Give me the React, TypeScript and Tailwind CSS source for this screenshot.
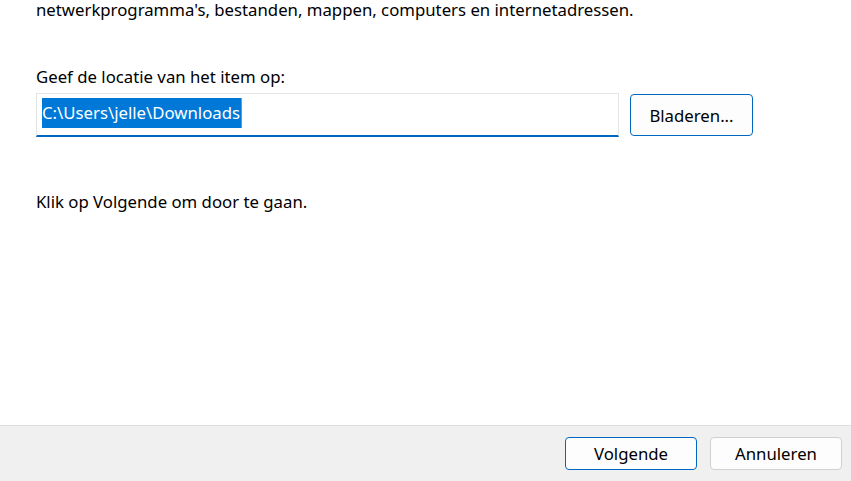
import React from 'react';

const font = { fontFamily: '"Noto Sans", "Open Sans", sans-serif' };

export default function App() {
  return (
    <div className="w-[851px] h-[481px] bg-white flex flex-col overflow-hidden text-[16.75px] text-black" style={font}>
      <div className="flex-1 pl-[36px]">
        <p className="leading-[20px]">netwerkprogramma's, bestanden, mappen, computers en internetadressen.</p>
        <p className="mt-[46px] leading-[22px]">Geef de locatie van het item op:</p>
        <div className="mt-[5px] flex items-start gap-[11px]">
          <div className="w-[583px] h-[44px] border border-[#e5e5e5] border-b-2 border-b-[#0067c0] flex items-center pl-[5px] pb-[4px]">
            <span className="bg-[#0078d7] text-white leading-[30px] pr-[1px] border-r border-r-[#e87a1c]">C:\Users\jelle\Downloads</span>
          </div>
          <button className="w-[123px] h-[42px] mt-[1px] pt-[1px] rounded-[4px] border border-[#0067c0] bg-[#fdfdfd]">Bladeren...</button>
        </div>
        <p className="mt-[54px] leading-[22px]">Klik op Volgende om door te gaan.</p>
      </div>
      <div className="h-[56px] bg-[#f0f0f0] border-t border-t-[#dfdfdf] flex items-center justify-end gap-[13px] pr-[9px]">
        <button className="w-[132px] h-[33px] rounded-[4px] border border-[#0067c0] bg-[#fdfdfd]">Volgende</button>
        <button className="w-[132px] h-[33px] rounded-[4px] border border-[#d0d0d0] bg-[#fdfdfd]">Annuleren</button>
      </div>
    </div>
  );
}
